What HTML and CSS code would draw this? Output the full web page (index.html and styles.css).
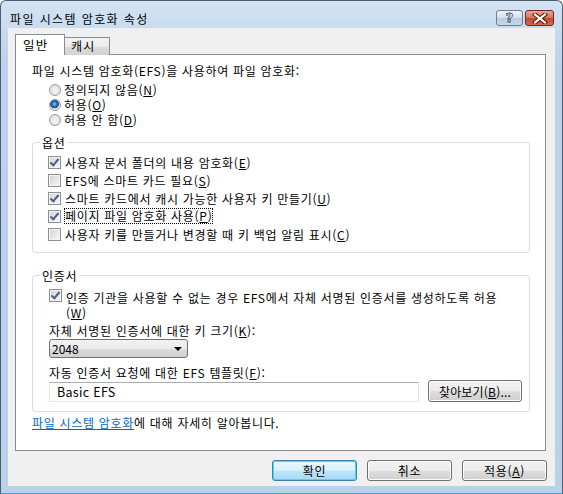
FILE: index.html
```html
<!DOCTYPE html>
<html lang="ko">

<head>
    <meta charset="UTF-8">
    <title>파일 시스템 암호화 속성</title>
    <link rel="stylesheet" href="styles.css">
</head>

<body>
    <div class="window">
        <div class="titlebar">
            <span class="title">파일 시스템 암호화 속성</span>
            <div class="caption-buttons">
                <span class="cap-btn help">?</span>
                <span class="cap-btn close">
                    <svg width="16" height="11" viewBox="0 0 16 11">
                        <path d="M3 1.5 L13 9.5 M13 1.5 L3 9.5" stroke="#5a1a10" stroke-width="4.2" stroke-linecap="square" />
                        <path d="M3 1.5 L13 9.5 M13 1.5 L3 9.5" stroke="#ffffff" stroke-width="2.2" stroke-linecap="square" />
                    </svg>
                </span>
            </div>
        </div>

        <div class="client">
            <div class="tabs">
                <span class="tab active">일반</span>
                <span class="tab">캐시</span>
            </div>

            <div class="panel">
                <p class="heading">파일 시스템 암호화(EFS)을 사용하여 파일 암호화:</p>
                <div class="radios">
                    <label class="radio-row"><span class="radio"></span>정의되지 않음(<u>N</u>)</label>
                    <label class="radio-row"><span class="radio selected"></span>허용(<u>O</u>)</label>
                    <label class="radio-row"><span class="radio"></span>허용 안 함(<u>D</u>)</label>
                </div>

                <fieldset class="group">
                    <legend>옵션</legend>
                    <div class="group-body options">
                        <label class="check-row"><span class="checkbox checked"></span><span>사용자 문서 폴더의 내용 암호화(<u>E</u>)</span></label>
                        <label class="check-row"><span class="checkbox"></span><span>EFS에 스마트 카드 필요(<u>S</u>)</span></label>
                        <label class="check-row"><span class="checkbox checked"></span><span>스마트 카드에서 캐시 가능한 사용자 키 만들기(<u>U</u>)</span></label>
                        <label class="check-row"><span class="checkbox checked"></span><span class="focused">페이지 파일 암호화 사용(<u>P</u>)</span></label>
                        <label class="check-row"><span class="checkbox"></span><span>사용자 키를 만들거나 변경할 때 키 백업 알림 표시(<u>C</u>)</span></label>
                    </div>
                </fieldset>

                <fieldset class="group cert">
                    <legend>인증서</legend>
                    <div class="group-body">
                        <label class="check-row wrap"><span class="checkbox checked"></span><span>인증 기관을 사용할 수 없는 경우 EFS에서 자체 서명된 인증서를 생성하도록 허용<br>(<u>W</u>)</span></label>
                        <p class="field-label">자체 서명된 인증서에 대한 키 크기(<u>K</u>):</p>
                        <div class="combo">
                            <span>2048</span>
                            <span class="arrow"></span>
                        </div>
                        <p class="field-label template">자동 인증서 요청에 대한 EFS 템플릿(<u>F</u>):</p>
                        <div class="template-row">
                            <div class="textbox">Basic EFS</div>
                            <button class="btn browse">찾아보기(<u>B</u>)...</button>
                        </div>
                    </div>
                </fieldset>

                <p class="more"><a href="#">파일 시스템 암호화</a>에 대해 자세히 알아봅니다.</p>
            </div>

            <div class="footer">
                <button class="btn default">확인</button>
                <button class="btn">취소</button>
                <button class="btn">적용(<u>A</u>)</button>
            </div>
        </div>
    </div>
</body>

</html>
```

FILE: styles.css
```css
* {
    box-sizing: border-box;
}

body {
    margin: 0;
    font-family: "Noto Sans CJK KR", "Noto Sans", sans-serif;
    font-size: 12px;
    letter-spacing: 0.7px;
    color: #000;
    background: #fff;
}

p {
    margin: 0;
}

.window {
    width: 563px;
    height: 494px;
    border: 1px solid #4e5d70;
    border-bottom-color: #35a8cf;
    border-radius: 6px 6px 0 0;
    background: linear-gradient(#d3e3f4, #bcd3eb 60px, #bad1ea);
    overflow: hidden;
}

/* title bar */
.titlebar {
    height: 27px;
    display: flex;
    justify-content: space-between;
    align-items: flex-start;
    padding: 0 8px 0 9px;
}

.title {
    line-height: 15px;
    margin-top: 10px;
    font-size: 12px;
    letter-spacing: 1.4px;
}

.caption-buttons {
    display: flex;
    gap: 2px;
    margin-top: 9px;
}

.cap-btn {
    height: 16px;
    border-radius: 3px;
    display: flex;
    align-items: center;
    justify-content: center;
}

.help {
    width: 27px;
    border: 1px solid #6c7d92;
    background: linear-gradient(#eef3f9, #d4e0ee 50%, #b9cbe1 51%, #c9d8ea);
    color: #fff;
    font-family: "DejaVu Sans", sans-serif;
    font-weight: bold;
    font-size: 13px;
    letter-spacing: 0;
    -webkit-text-stroke: 0.8px #3a4a5e;
    line-height: 14px;
}

.close {
    width: 29px;
    border: 1px solid #6f2a20;
    background: linear-gradient(#eaa491, #d8735d 50%, #c4452e 51%, #d46b4c);
}

/* client area */
.client {
    margin: 0 7px;
    height: 458px;
    background: #f0f0f0;
    padding: 6px 9px 0 7px;
}

.tabs {
    display: flex;
    align-items: flex-end;
    height: 21px;
    margin-bottom: -1px;
    position: relative;
    z-index: 1;
}

.tab {
    height: 18px;
    width: 46px;
    margin-left: -1px;
    border: 1px solid #898c95;
    border-bottom: none;
    background: linear-gradient(#f3f3f3, #ebebeb 50%, #dddddd 51%, #d2d2d2);
    padding-left: 6px;
    line-height: 16px;
    letter-spacing: 1.2px;
}

.tab.active {
    height: 21px;
    width: 50px;
    margin-left: 0;
    background: #fff;
    padding-left: 7px;
    line-height: 19px;
    font-size: 12.5px;
}

.panel {
    height: 397px;
    border: 1px solid #898c95;
    background: #fff;
    padding: 8px 15px 0 16px;
}

.heading {
    line-height: 15px;
}

.radios {
    margin-top: 4px;
}

.radio-row {
    display: flex;
    align-items: center;
    height: 15px;
    padding-left: 17px;
}

.radio {
    width: 12px;
    height: 12px;
    border-radius: 50%;
    border: 1px solid #9a9a9a;
    background: radial-gradient(circle at 50% 60%, #f6f6f6, #d8d8d8);
    margin-right: 3px;
    flex: none;
}

.radio.selected {
    background: radial-gradient(circle at 45% 40%, #9fd3f5 0, #2b7cc8 2px, #13497f 4px, #dcdcdc 4.6px, #f2f2f2);
}

/* group boxes */
.group {
    margin: 8px 0 0;
    padding: 0;
    border: 1px solid #d5dfe5;
    border-radius: 3px;
}

.group legend {
    margin-left: 7px;
    padding: 0 2px;
    line-height: 15px;
}

.group-body {
    padding: 3px 8px 9px 15px;
}

.check-row {
    display: flex;
    align-items: center;
    height: 18px;
}

.checkbox {
    width: 13px;
    height: 13px;
    flex: none;
    border: 1px solid #8e8f8f;
    box-shadow: inset 0 0 0 1px #f4f4f4;
    background: linear-gradient(135deg, #d2d2d2, #f8f8f8);
    margin-right: 4px;
    position: relative;
}

.checkbox.checked::after {
    content: "";
    position: absolute;
    left: 3px;
    top: 0px;
    width: 3px;
    height: 7px;
    border: solid #4a5e8e;
    border-width: 0 2px 2px 0;
    transform: rotate(40deg);
}

.focused {
    outline: 1px dotted #000;
    outline-offset: 0;
    line-height: 14px;
}

.cert {
    margin-top: 15px;
}

.cert .group-body {
    padding: 7px 0 9px 16px;
}

.check-row.wrap {
    height: auto;
    align-items: flex-start;
    line-height: 15px;
    white-space: nowrap;
}

.check-row.wrap .checkbox {
    margin-top: -1px;
}

.field-label {
    line-height: 15px;
    margin-top: 3px;
}

.field-label.template {
    line-height: 14px;
    margin-top: 8px;
}

.combo {
    width: 139px;
    height: 19px;
    margin-top: 1px;
    border: 1px solid #707070;
    border-radius: 3px;
    background: linear-gradient(#f2f2f2, #ebebeb 50%, #dddddd 51%, #cfcfcf);
    display: flex;
    align-items: center;
    justify-content: space-between;
    padding: 0 5px 0 2px;
    line-height: 15px;
    letter-spacing: 0;
}

.arrow {
    width: 0;
    height: 0;
    border-left: 4px solid transparent;
    border-right: 4px solid transparent;
    border-top: 4px solid #000;
}

.template-row {
    display: flex;
    gap: 9px;
    align-items: flex-end;
}

.textbox {
    width: 370px;
    height: 20px;
    border: 1px solid #e2e3ea;
    border-top-color: #abadb3;
    border-bottom-color: #e3e9ef;
    padding-left: 7px;
    line-height: 18px;
    font-size: 12.5px;
    letter-spacing: 0.3px;
}

/* buttons */
.btn {
    font-family: inherit;
    font-size: 12px;
    letter-spacing: 0.7px;
    color: #000;
    height: 21px;
    border: 1px solid #707070;
    border-radius: 3px;
    background: linear-gradient(#f2f2f2, #ebebeb 50%, #dddddd 51%, #cfcfcf);
    box-shadow: inset 0 0 0 1px #fcfcfc;
    padding: 0;
    line-height: 17px;
}

.browse {
    width: 94px;
    height: 22px;
    letter-spacing: 0.2px;
}

.btn.default {
    border-color: #3c7fb1;
    background: linear-gradient(#eaf6fd, #d9f0fc 50%, #bee6fd 51%, #a7d9f5);
    box-shadow: inset 0 0 0 1px #48d8fb;
}

.more {
    margin-top: 3px;
    line-height: 15px;
}

.more a {
    color: #0066cc;
}

.footer {
    display: flex;
    justify-content: flex-end;
    gap: 10px;
    margin-top: 9px;
    margin-right: -1px;
}

.footer .btn {
    width: 85px;
}
```
